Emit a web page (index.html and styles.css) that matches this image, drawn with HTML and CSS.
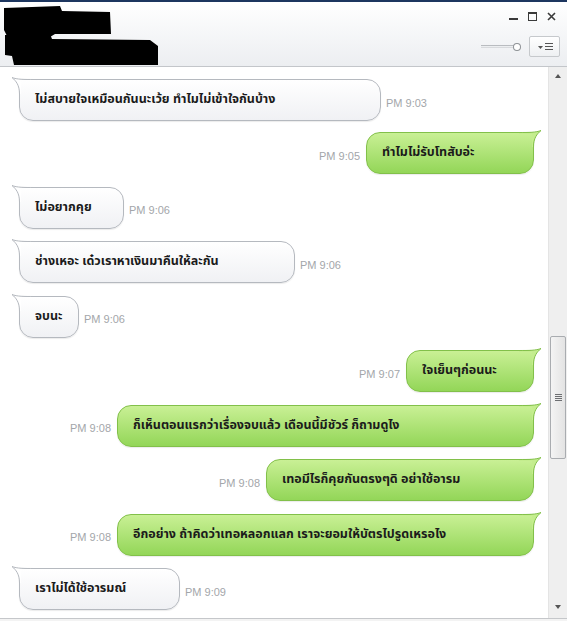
FILE: index.html
```html
<!DOCTYPE html>
<html lang="th">
<head>
<meta charset="utf-8">
<title>Chat</title>
<link rel="stylesheet" href="styles.css">
</head>
<body>
<div class="window">
  <header class="header">
    <svg class="redact" width="170" height="66" viewBox="0 0 170 66">
      <polygon points="4,8 60,6 62,11 110,12 111,34 55,34 50,37 8,38 4,30" fill="#000"/>
      <polygon points="5,35 50,34 52,39 150,40 158,46 158,65 14,65 12,56 5,55" fill="#000"/>
    </svg>
    <div class="controls">
      <div class="winbtns">
        <span class="btn-min"></span>
        <span class="btn-max"></span>
        <svg class="btn-close" width="9" height="9" viewBox="0 0 9 9"><path d="M1 1 L8 8 M8 1 L1 8" stroke="#3a3a3a" stroke-width="1.6"/></svg>
      </div>
      <div class="tools">
        <div class="slider"><span class="track"></span><span class="knob"></span></div>
        <div class="menu-btn">
          <svg width="20" height="12" viewBox="0 0 20 12"><path d="M3 5 L8 5 L5.5 8 Z" fill="#555"/><path d="M10 2.5 H18 M10 5.5 H18 M10 8.5 H18" stroke="#555" stroke-width="1.2"/></svg>
        </div>
      </div>
    </div>
  </header>
  <div class="main">
    <div class="chat">
      <div class="row left first"><div class="bubble in w1"><svg class="tail" width="26" height="20" viewBox="0 0 26 20"><path d="M22 2.5 C12 2.5 5 2.5 0 0.5 C4 4 7.5 8 7.5 17 L9 17 L9 4 L22 4 Z" class="tf"/><path d="M22 2.5 C12 2.5 5 2.5 0 0.5 C4 4 7.5 8 7.5 17" class="ts"/></svg>ไม่สบายใจเหมือนกันนะเว้ย ทำไมไม่เข้าใจกันบ้าง</div><span class="time">PM 9:03</span></div>
      <div class="row right"><span class="time">PM 9:05</span><div class="bubble out w2"><svg class="tail" width="26" height="20" viewBox="0 0 26 20"><path d="M22 2.5 C12 2.5 5 2.5 0 0.5 C4 4 7.5 8 7.5 17 L9 17 L9 4 L22 4 Z" class="tf"/><path d="M22 2.5 C12 2.5 5 2.5 0 0.5 C4 4 7.5 8 7.5 17" class="ts"/></svg>ทำไมไม่รับโทสับอ่ะ</div></div>
      <div class="row left"><div class="bubble in w3"><svg class="tail" width="26" height="20" viewBox="0 0 26 20"><path d="M22 2.5 C12 2.5 5 2.5 0 0.5 C4 4 7.5 8 7.5 17 L9 17 L9 4 L22 4 Z" class="tf"/><path d="M22 2.5 C12 2.5 5 2.5 0 0.5 C4 4 7.5 8 7.5 17" class="ts"/></svg>ไม่อยากคุย</div><span class="time">PM 9:06</span></div>
      <div class="row left"><div class="bubble in w4"><svg class="tail" width="26" height="20" viewBox="0 0 26 20"><path d="M22 2.5 C12 2.5 5 2.5 0 0.5 C4 4 7.5 8 7.5 17 L9 17 L9 4 L22 4 Z" class="tf"/><path d="M22 2.5 C12 2.5 5 2.5 0 0.5 C4 4 7.5 8 7.5 17" class="ts"/></svg>ช่างเหอะ เด๋วเราหาเงินมาคืนให้ละกัน</div><span class="time">PM 9:06</span></div>
      <div class="row left"><div class="bubble in w5"><svg class="tail" width="26" height="20" viewBox="0 0 26 20"><path d="M22 2.5 C12 2.5 5 2.5 0 0.5 C4 4 7.5 8 7.5 17 L9 17 L9 4 L22 4 Z" class="tf"/><path d="M22 2.5 C12 2.5 5 2.5 0 0.5 C4 4 7.5 8 7.5 17" class="ts"/></svg>จบนะ</div><span class="time">PM 9:06</span></div>
      <div class="row right"><span class="time">PM 9:07</span><div class="bubble out w6"><svg class="tail" width="26" height="20" viewBox="0 0 26 20"><path d="M22 2.5 C12 2.5 5 2.5 0 0.5 C4 4 7.5 8 7.5 17 L9 17 L9 4 L22 4 Z" class="tf"/><path d="M22 2.5 C12 2.5 5 2.5 0 0.5 C4 4 7.5 8 7.5 17" class="ts"/></svg>ใจเย็นๆก่อนนะ</div></div>
      <div class="row right"><span class="time">PM 9:08</span><div class="bubble out w7"><svg class="tail" width="26" height="20" viewBox="0 0 26 20"><path d="M22 2.5 C12 2.5 5 2.5 0 0.5 C4 4 7.5 8 7.5 17 L9 17 L9 4 L22 4 Z" class="tf"/><path d="M22 2.5 C12 2.5 5 2.5 0 0.5 C4 4 7.5 8 7.5 17" class="ts"/></svg>ก็เห็นตอนแรกว่าเรื่องจบแล้ว เดือนนี้มีชัวร์ ก็ถามดูไง</div></div>
      <div class="row right"><span class="time">PM 9:08</span><div class="bubble out w8"><svg class="tail" width="26" height="20" viewBox="0 0 26 20"><path d="M22 2.5 C12 2.5 5 2.5 0 0.5 C4 4 7.5 8 7.5 17 L9 17 L9 4 L22 4 Z" class="tf"/><path d="M22 2.5 C12 2.5 5 2.5 0 0.5 C4 4 7.5 8 7.5 17" class="ts"/></svg>เทอมีไรก็คุยกันตรงๆดิ อย่าใช้อารม</div></div>
      <div class="row right"><span class="time">PM 9:08</span><div class="bubble out w7"><svg class="tail" width="26" height="20" viewBox="0 0 26 20"><path d="M22 2.5 C12 2.5 5 2.5 0 0.5 C4 4 7.5 8 7.5 17 L9 17 L9 4 L22 4 Z" class="tf"/><path d="M22 2.5 C12 2.5 5 2.5 0 0.5 C4 4 7.5 8 7.5 17" class="ts"/></svg>อีกอย่าง ถ้าคิดว่าเทอหลอกแลก เราจะยอมให้บัตรไปรูดเหรอไง</div></div>
      <div class="row left"><div class="bubble in w10"><svg class="tail" width="26" height="20" viewBox="0 0 26 20"><path d="M22 2.5 C12 2.5 5 2.5 0 0.5 C4 4 7.5 8 7.5 17 L9 17 L9 4 L22 4 Z" class="tf"/><path d="M22 2.5 C12 2.5 5 2.5 0 0.5 C4 4 7.5 8 7.5 17" class="ts"/></svg>เราไม่ได้ใช้อารมณ์</div><span class="time">PM 9:09</span></div>
    </div>
    <div class="scrollbar">
      <span class="arrow up"></span>
      <div class="sb-track">
        <div class="thumb"><span class="grip"></span></div>
      </div>
      <span class="arrow down"></span>
    </div>
  </div>
  <div class="footer"></div>
</div>
</body>
</html>
```

FILE: styles.css
```css
* { box-sizing: border-box; }
html, body { margin: 0; padding: 0; }
body {
  width: 567px;
  height: 621px;
  overflow: hidden;
  background: #fff;
  font-family: Tahoma, "Noto Sans Thai", "Noto Sans Thai UI", Loma, Garuda, Norasi, "Liberation Sans", sans-serif;
}
.window {
  display: flex;
  flex-direction: column;
  height: 621px;
}
.header {
  height: 67px;
  flex: none;
  border-top: 2px solid #1d365f;
  border-bottom: 1px solid #c3c6ca;
  background: linear-gradient(#ffffff, #eceef1);
  display: flex;
  justify-content: space-between;
  align-items: flex-start;
}
.redact { display: block; margin-top: -2px; }
.controls {
  display: flex;
  flex-direction: column;
  align-items: flex-end;
  padding: 9px 7px 0 0;
}
.winbtns {
  display: flex;
  align-items: center;
  gap: 10px;
  height: 10px;
  padding-right: 4px;
}
.btn-min {
  width: 9px;
  height: 2px;
  background: #3a3a3a;
  margin-top: 6px;
}
.btn-max {
  width: 9px;
  height: 9px;
  border: 1.5px solid #3a3a3a;
  border-top-width: 2px;
}
.btn-close { display: block; }
.tools {
  display: flex;
  align-items: center;
  margin-top: 15px;
  gap: 8px;
}
.slider {
  width: 40px;
  height: 10px;
  display: flex;
  align-items: center;
}
.track {
  display: block;
  width: 34px;
  height: 3px;
  border-top: 1px solid #b9bcc0;
  border-bottom: 1px solid #d8dadd;
  background: #eceef0;
}
.knob {
  display: block;
  width: 8px;
  height: 8px;
  margin-left: -1px;
  border-radius: 50%;
  border: 1px solid #8e9296;
  background: #fff;
}
.menu-btn {
  width: 31px;
  height: 21px;
  border: 1px solid #c6c9cc;
  border-radius: 2px;
  background: linear-gradient(#ffffff, #eef0f2);
  display: flex;
  align-items: center;
  justify-content: center;
}
.menu-btn svg { display: block; }
.main {
  flex: 1;
  display: flex;
  min-height: 0;
}
.chat {
  flex: 1;
  display: flex;
  flex-direction: column;
  gap: 12.5px;
  padding-top: 12px;
  overflow: hidden;
}
.row {
  display: flex;
  align-items: center;
}
.row.first { margin-bottom: -1.5px; }
.row.left { padding-left: 19px; }
.row.right { justify-content: flex-end; padding-right: 14px; }
.time {
  font-family: "Liberation Sans", Arial, sans-serif;
  font-size: 11px;
  color: #a3a6aa;
  padding-top: 5px;
  white-space: nowrap;
}
.row.left .time { margin-left: 5px; }
.row.right .time { margin-right: 6px; }
.bubble {
  position: relative;
  height: 42px;
  line-height: 40px;
  padding: 0 0 0 15px;
  border-radius: 14px;
  font-size: 12.5px;
  font-weight: bold;
  color: #1b1b1b;
  white-space: nowrap;
  flex: none;
}
.bubble.in {
  background: linear-gradient(#ffffff, #f0f1f4);
  border: 1px solid #b5b9bf;
  border-top-left-radius: 3px;
  box-shadow: 0 1px 1px rgba(0,0,0,0.08);
}
.bubble.out {
  background: linear-gradient(#c9f095, #93d658);
  border: 1px solid #82c04a;
  border-top-right-radius: 3px;
  box-shadow: 0 1px 1px rgba(0,0,0,0.08);
}
.tail {
  position: absolute;
  top: -3px;
  left: -8px;
  overflow: visible;
}
.bubble.out .tail {
  left: auto;
  right: -8px;
  transform: scaleX(-1);
}
.tf { stroke: none; }
.ts { fill: none; stroke-width: 1; }
.bubble.in .tf { fill: #ffffff; }
.bubble.in .ts { stroke: #b5b9bf; }
.bubble.out .tf { fill: #c4ed8e; }
.bubble.out .ts { stroke: #82c04a; }
.w1 { width: 362px; }
.w2 { width: 168px; }
.w3 { width: 105px; }
.w4 { width: 276px; }
.w5 { width: 60px; }
.w6 { width: 128px; }
.w7 { width: 417px; }
.w8 { width: 268px; }
.w10 { width: 161px; }
.scrollbar {
  width: 19px;
  flex: none;
  background: #efefef;
  border-left: 1px solid #e4e4e4;
  display: flex;
  flex-direction: column;
  align-items: center;
}
.arrow {
  display: block;
  width: 0;
  height: 0;
  border-left: 3.5px solid transparent;
  border-right: 3.5px solid transparent;
  flex: none;
}
.arrow.up { border-bottom: 4px solid #555; margin-top: 7px; }
.arrow.down { border-top: 4px solid #555; margin-bottom: 9px; }
.sb-track {
  flex: 1;
  width: 100%;
  padding-top: 258px;
}
.thumb {
  width: 16px;
  height: 123px;
  margin-left: 1px;
  border: 1px solid #a9acb0;
  border-radius: 2px;
  background: linear-gradient(90deg, #f4f4f4, #e3e3e3);
  display: flex;
  align-items: center;
  justify-content: center;
}
.grip {
  display: block;
  width: 7px;
  height: 7px;
  background: repeating-linear-gradient(#6d6f72 0 1px, transparent 1px 2px);
}
.footer {
  height: 3px;
  flex: none;
  border-top: 1px solid #c5c7ca;
  background: #f3f3f3;
}
```
